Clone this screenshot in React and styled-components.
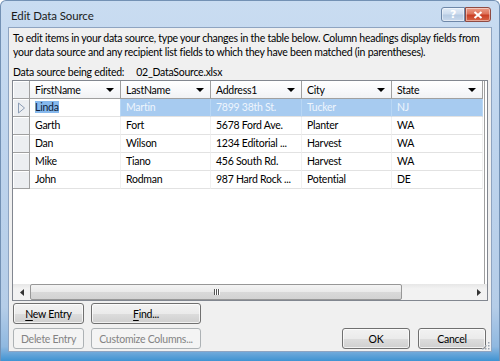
import React from 'react';
import styled, { createGlobalStyle, css } from 'styled-components';

const GlobalStyle = createGlobalStyle`
  html, body {
    margin: 0;
    padding: 0;
    background: #ffffff;
  }
  body {
    font-family: Lato, "Noto Sans", sans-serif;
    font-size: 10.5px;
    letter-spacing: -0.25px;
    color: #000;
  }
`;

const Window = styled.div`
  width: 500px;
  height: 361px;
  box-sizing: border-box;
  display: flex;
  flex-direction: column;
  background: linear-gradient(180deg, #c9dcf1 0%, #bed4ed 40%, #b5cde8 85%, #8fb8e0 96%, #3f93d2 100%);
  border: 1px solid #7391b4;
  border-bottom: none;
  border-radius: 6px 6px 0 0;
  overflow: hidden;
`;

const TitleBar = styled.div`
  height: 26px;
  display: flex;
  align-items: center;
  justify-content: space-between;
  padding: 0 8px 0 10px;
`;

const Title = styled.div`
  font-size: 11.5px;
  letter-spacing: -0.1px;
  color: #1b1b1b;
  padding-top: 2px;
`;

const CaptionButtons = styled.div`
  display: flex;
  align-self: flex-start;
  margin-top: 6px;
`;

const CaptionButton = styled.div`
  height: 15px;
  width: ${(p) => (p.$close ? '26px' : '24px')};
  box-sizing: border-box;
  display: flex;
  align-items: center;
  justify-content: center;
  border: 1px solid ${(p) => (p.$close ? '#8f4b43' : '#6e87a8')};
  border-radius: ${(p) => (p.$close ? '0 3px 3px 0' : '3px 0 0 3px')};
  background: ${(p) =>
    p.$close
      ? 'linear-gradient(180deg, #eb9c88 0%, #de735a 45%, #c93f25 55%, #d86546 100%)'
      : 'linear-gradient(180deg, #e3ecf7 0%, #cddcee 45%, #b7cbe3 55%, #c9d9ec 100%)'};
  color: #fff;
  font-size: 11px;
  font-weight: bold;
  font-family: "DejaVu Sans", sans-serif;
  box-shadow: inset 0 0 0 1px rgba(255, 255, 255, 0.45);
`;

const Client = styled.div`
  flex: 1;
  margin: 0 7px 9px 7px;
  background: #f0f0f0;
  border: 1px solid #8ea4c1;
  padding: 3px 3px 0 3px;
  display: flex;
  flex-direction: column;
  position: relative;
`;

const Intro = styled.p`
  margin: 0;
  line-height: 14px;
  padding-left: 1px;
  white-space: nowrap;
`;

const SourceLine = styled.div`
  display: flex;
  gap: 12px;
  margin-top: 6px;
  line-height: 14px;
  padding-left: 1px;
`;

const Grid = styled.div`
  margin-top: 1px;
  height: 221px;
  box-sizing: border-box;
  border: 1px solid #828790;
  background: #fff;
  display: flex;
  flex-direction: column;
`;

const Body = styled.div`
  flex: 1;
  width: 472px;
  border-right: 1px solid #a0a0a0;
  box-sizing: border-box;
`;

const Row = styled.div`
  display: grid;
  grid-template-columns: 17px 91px 90px 91px 90px 91px;
  height: 18px;
`;

const HeaderCell = styled.div`
  box-sizing: border-box;
  display: flex;
  align-items: center;
  justify-content: space-between;
  padding: 0 6px 0 5px;
  background: linear-gradient(180deg, #ffffff 0%, #f7f8fa 60%, #f1f2f4 100%);
  border-right: 1px solid #a0a0a0;
  border-bottom: 1px solid #a0a0a0;
  color: #000;
`;

const Arrow = styled.span`
  width: 0;
  height: 0;
  border-left: 4px solid transparent;
  border-right: 4px solid transparent;
  border-top: 4px solid #000;
`;

const RowHead = styled.div`
  box-sizing: border-box;
  background: #eceef1;
  border-right: 1px solid #a0a0a0;
  border-bottom: 1px solid #a0a0a0;
  box-shadow: inset 1px 1px 0 #ffffff;
  display: flex;
  align-items: center;
  justify-content: center;
`;

const Cell = styled.div`
  box-sizing: border-box;
  padding: 0 5px;
  line-height: 17px;
  white-space: nowrap;
  overflow: hidden;
  border-right: 1px solid #f1f1f1;
  border-bottom: 1px solid #e2e2e2;
  ${(p) =>
    p.$selected &&
    css`
      background: #a7cbf0;
      color: #eef5fd;
      border-right-color: #b7d6f4;
    `}
  ${(p) =>
    p.$editing &&
    css`
      background: #fff;
      color: #0c1c38;
    `}
`;

const Highlight = styled.span`
  background: #86b8ec;
`;

const ScrollBar = styled.div`
  height: 16px;
  display: flex;
  align-items: stretch;
  background: linear-gradient(180deg, #e6e6e6 0%, #f2f2f2 30%, #f2f2f2 100%);
`;

const ScrollArrow = styled.div`
  width: 17px;
  display: flex;
  align-items: center;
  justify-content: center;
`;

const Thumb = styled.div`
  width: ${(p) => p.$width}px;
  box-sizing: border-box;
  border: 1px solid #979797;
  border-radius: 2px;
  background: linear-gradient(180deg, #f4f4f4 0%, #e9e9e9 50%, #d9d9d9 51%, #d2d2d2 100%);
  display: flex;
  align-items: center;
  justify-content: center;
  gap: 1px;
`;

const Grip = styled.span`
  width: 1px;
  height: 6px;
  background: #555;
  box-shadow: 1px 0 0 #fff;
`;

const Track = styled.div`
  flex: 1;
`;

const ButtonBar = styled.div`
  display: flex;
  justify-content: space-between;
  margin-top: 2px;
  padding: 0 2px 0 1px;
`;

const LeftButtons = styled.div`
  display: grid;
  grid-template-columns: 71px 110px;
  grid-auto-rows: 21px;
  column-gap: 7px;
  row-gap: 4px;
`;

const RightButtons = styled.div`
  display: flex;
  align-self: flex-end;
  gap: 8px;
`;

const Button = styled.button`
  height: 21px;
  width: ${(p) => p.$width || 'auto'};
  box-sizing: border-box;
  padding: 0;
  font: inherit;
  letter-spacing: inherit;
  border-radius: 3px;
  border: 1px solid ${(p) => (p.disabled ? '#adb2b5' : '#707070')};
  background: ${(p) =>
    p.disabled
      ? '#f4f4f4'
      : 'linear-gradient(180deg, #f2f2f2 0%, #ebebeb 50%, #dddddd 51%, #cfcfcf 100%)'};
  color: ${(p) => (p.disabled ? '#838383' : '#000')};
  box-shadow: ${(p) => (p.disabled ? 'none' : 'inset 0 0 0 1px rgba(255,255,255,0.7)')};
`;

const Key = styled.u`
  text-underline-offset: 2px;
`;

const SizeGrip = styled.svg`
  position: absolute;
  right: 1px;
  bottom: 1px;
`;

const columns = ['FirstName', 'LastName', 'Address1', 'City', 'State'];

const records = [
  ['Linda', 'Martin', '7899 38th St.', 'Tucker', 'NJ'],
  ['Garth', 'Fort', '5678 Ford Ave.', 'Planter', 'WA'],
  ['Dan', 'Wilson', '1234 Editorial ...', 'Harvest', 'WA'],
  ['Mike', 'Tiano', '456 South Rd.', 'Harvest', 'WA'],
  ['John', 'Rodman', '987 Hard Rock ...', 'Potential', 'DE'],
];

const CurrentRow = () => (
  <svg width="9" height="12" viewBox="0 0 9 12">
    <path d="M1.5 1 L7.5 6 L1.5 11 Z" fill="none" stroke="#8c9db5" strokeWidth="1" />
  </svg>
);

const App = () => (
  <>
    <GlobalStyle />
    <Window>
      <TitleBar>
        <Title>Edit Data Source</Title>
        <CaptionButtons>
          <CaptionButton>?</CaptionButton>
          <CaptionButton $close>
            <svg width="10" height="8" viewBox="0 0 10 8">
              <path d="M1.5 1 L8.5 7 M8.5 1 L1.5 7" stroke="#fff" strokeWidth="2" />
            </svg>
          </CaptionButton>
        </CaptionButtons>
      </TitleBar>
      <Client>
        <Intro>
          To edit items in your data source, type your changes in the table below. Column headings display fields from
          <br />
          your data source and any recipient list fields to which they have been matched (in parentheses).
        </Intro>
        <SourceLine>
          <span>Data source being edited:</span>
          <span>02_DataSource.xlsx</span>
        </SourceLine>
        <Grid>
          <Body>
            <Row>
              <RowHead />
              {columns.map((c) => (
                <HeaderCell key={c}>
                  {c}
                  <Arrow />
                </HeaderCell>
              ))}
            </Row>
            {records.map((r, i) => (
              <Row key={r[0]}>
                <RowHead>{i === 0 && <CurrentRow />}</RowHead>
                {r.map((v, j) => (
                  <Cell key={j} $selected={i === 0} $editing={i === 0 && j === 0}>
                    {i === 0 && j === 0 ? <Highlight>{v}</Highlight> : v}
                  </Cell>
                ))}
              </Row>
            ))}
          </Body>
          <ScrollBar>
            <ScrollArrow>
              <svg width="4" height="7" viewBox="0 0 4 7">
                <path d="M4 0 L0 3.5 L4 7 Z" fill="#333" />
              </svg>
            </ScrollArrow>
            <Thumb $width={372}>
              <Grip />
              <Grip />
              <Grip />
            </Thumb>
            <Track />
            <ScrollArrow>
              <svg width="4" height="7" viewBox="0 0 4 7">
                <path d="M0 0 L4 3.5 L0 7 Z" fill="#333" />
              </svg>
            </ScrollArrow>
          </ScrollBar>
        </Grid>
        <ButtonBar>
          <LeftButtons>
            <Button>
              <Key>N</Key>ew Entry
            </Button>
            <Button>
              <Key>F</Key>ind...
            </Button>
            <Button disabled>Delete Entry</Button>
            <Button disabled>Customize Columns...</Button>
          </LeftButtons>
          <RightButtons>
            <Button $width="68px">OK</Button>
            <Button $width="68px">Cancel</Button>
          </RightButtons>
        </ButtonBar>
        <SizeGrip width="10" height="10" viewBox="0 0 10 10">
          {[[8, 2], [8, 5], [5, 5], [8, 8], [5, 8], [2, 8]].map(([x, y]) => (
            <rect key={`${x}-${y}`} x={x} y={y} width="1.5" height="1.5" fill="#9aa4b0" />
          ))}
        </SizeGrip>
      </Client>
    </Window>
  </>
);

export default App;
